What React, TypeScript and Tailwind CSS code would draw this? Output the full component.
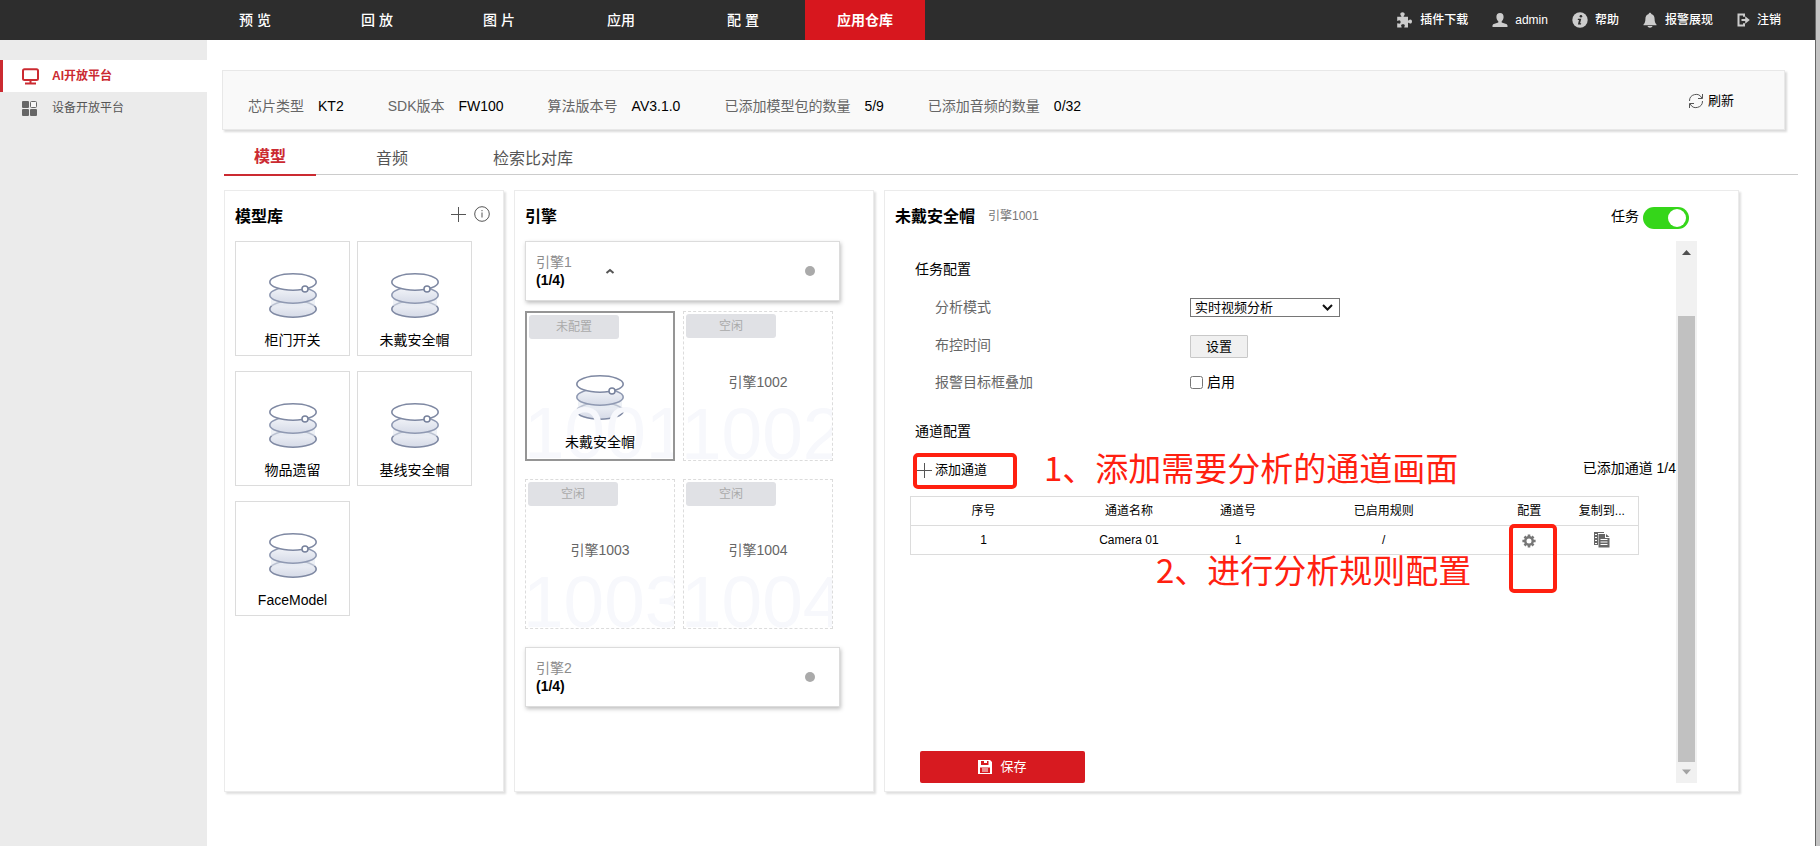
import React, { useState } from 'react';

const navItems = ['预 览', '回 放', '图 片', '应用', '配 置', '应用仓库'];

const stats = [
  { label: '芯片类型', value: 'KT2' },
  { label: 'SDK版本', value: 'FW100' },
  { label: '算法版本号', value: 'AV3.1.0' },
  { label: '已添加模型包的数量', value: '5/9' },
  { label: '已添加音频的数量', value: '0/32' },
];

const tabs = ['模型', '音频', '检索比对库'];

const models = ['柜门开关', '未戴安全帽', '物品遗留', '基线安全帽', 'FaceModel'];

const engines = [
  { id: '1001', status: '未配置', model: '未戴安全帽' },
  { id: '1002', status: '空闲' },
  { id: '1003', status: '空闲' },
  { id: '1004', status: '空闲' },
];

const PluginIcon = () => (
  <svg className="w-4 h-4" viewBox="0 0 16 16" fill="currentColor">
    <path d="M1.200 4.800h3.700c.5 0 .6-.4.3-.9C4.900 3.400 4.300 3 4.300 2.200 4.300 1 5.300.3 6.500.3S8.700 1 8.700 2.200c0 .8-.6 1.200-.9 1.700-.3.500-.2.900.3.900h3.900v3.100c0 .5.400.7.900.4.400-.3.700-.8 1.400-.8 1.100 0 1.700.9 1.700 2s-.6 2.100-1.700 2.100c-.7 0-1-.5-1.400-.8-.5-.3-.9-.1-.9.400v4.400H8.700c-.5 0-.6-.4-.4-.8.3-.4.5-.7.500-1.200 0-.9-.8-1.400-1.800-1.400s-1.900.5-1.900 1.400c0 .5.300.8.500 1.200.2.400.1.800-.4.800H1.200v-3.900c0-.5.3-.7.800-.4.400.2.700.5 1.200.5.900 0 1.400-.8 1.400-1.700S4.100 8.300 3.200 8.300c-.5 0-.8.3-1.200.5-.5.3-.8.100-.8-.4z" />
  </svg>
);

const UserIcon = () => (
  <svg className="w-4 h-4" viewBox="0 0 16 16" fill="currentColor">
    <path d="M8 1c2.400 0 3.600 1.700 3.600 3.900 0 1.800-.8 3.500-1.900 4.300v1.300l4.500 1.400c.8.3 1.300.9 1.300 1.700V15H.5v-1.400c0-.8.5-1.400 1.300-1.700l4.500-1.400V9.200C5.200 8.400 4.400 6.700 4.400 4.900 4.400 2.700 5.600 1 8 1z" />
  </svg>
);

const HelpIcon = () => (
  <svg className="w-4 h-4" viewBox="0 0 16 16">
    <circle cx="8" cy="8" r="7.700" fill="currentColor" />
    <circle cx="8.900" cy="4.300" r="1.300" fill="#2d2d2d" />
    <path d="M6 6.800h3.300l-1.200 4.500h1.100l-.3 1.200H5.900L7 8H5.700z" fill="#2d2d2d" />
  </svg>
);

const BellIcon = () => (
  <svg className="w-[14px] h-4" viewBox="0 0 14 16" fill="currentColor">
    <path d="M7 .8c.8 0 1.300.6 1.300 1.300C10.600 2.700 11.600 4.600 11.600 7c0 2.700.6 4.200 1.900 5.400v.9H.5v-.9C1.800 11.200 2.400 9.700 2.400 7c0-2.400 1-4.300 3.300-4.900C5.700 1.400 6.200.8 7 .8zM4.500 14h5c-.3 1-1.300 1.700-2.500 1.700S4.800 15 4.500 14z" />
  </svg>
);

const LogoutIcon = () => (
  <svg className="w-[13px] h-[14px]" viewBox="0 0 13 14" fill="currentColor">
    <path d="M.5.5H8v3.300H6V2.500H2.500v9H6v-1.300h2v3.300H.5z" />
    <path d="M4.500 5.900h3.700V3.300L12.800 7l-4.600 3.700V8.100H4.500z" />
  </svg>
);

const StackIcon = () => (
  <svg className="w-12 h-[45px]" viewBox="0 0 48 45" fill="none">
    <defs>
      <linearGradient id="disk" x1="0" y1="0" x2="0" y2="1">
        <stop offset="0" stopColor="#f3f5f9" />
        <stop offset="1" stopColor="#d5dae7" />
      </linearGradient>
    </defs>
    <ellipse cx="24" cy="36" rx="23.200" ry="8.200" fill="url(#disk)" stroke="#7f89a3" strokeWidth="1.600" />
    <path d="M2 24h44v9H2z" fill="#e3e7f0" opacity=".6" />
    <ellipse cx="24" cy="22" rx="23.200" ry="8.200" fill="url(#disk)" stroke="#8f99b2" strokeWidth="1.600" />
    <ellipse cx="24" cy="9" rx="23.200" ry="8.200" fill="#fff" stroke="#7f89a3" strokeWidth="1.600" />
    <circle cx="36" cy="16" r="3" fill="#fff" stroke="#76819c" strokeWidth="1.500" />
  </svg>
);

const PlusIcon = () => (
  <svg className="w-[15px] h-[15px]" viewBox="0 0 15 15" stroke="#555" fill="none">
    <path d="M7.500 0v15M0 7.500h15" />
  </svg>
);

const InfoIcon = () => (
  <svg className="w-4 h-4" viewBox="0 0 16 16" stroke="#555" fill="none">
    <circle cx="8" cy="8" r="7.300" />
    <path d="M8 6.500v5M8 4v1.200" />
  </svg>
);

const RefreshIcon = () => (
  <svg className="w-4 h-4" viewBox="0 0 16 16" stroke="#555" fill="none">
    <path d="M1.500 8a6.500 6.500 0 0 1 12.300-3M14.500 8a6.500 6.500 0 0 1-12.300 3" />
    <path d="M14.500 1v4.500H10M1.500 15v-4.500H6" />
  </svg>
);

const GearIcon = () => (
  <svg className="w-[14px] h-[14px]" viewBox="0 0 14 14" fill="none" stroke="#777">
    <circle cx="7" cy="7" r="3.700" strokeWidth="2.400" />
    <path
      d="M7 .4V3M7 11v2.600M.4 7H3M11 7h2.600M2.500 2.500l1.800 1.800M9.700 9.700l1.800 1.800M2.500 11.500l1.800-1.800M9.700 4.300l1.800-1.800"
      strokeWidth="2.600"
    />
  </svg>
);

const CopyIcon = () => (
  <svg className="w-4 h-4" viewBox="0 0 16 16" fill="#666">
    <path d="M0 0h10v1H4v12H0z" />
    <path d="M1 2.500h2M1 5.500h2M1 8.500h2M1 11.500h2" stroke="#fff" />
    <path d="M4.500 2H11v4h4.500v9.500h-11zM12 2l3.500 3H12z" />
    <path d="M6.500 7.500h7M6.500 10h7M6.500 12.500h7" stroke="#fff" />
  </svg>
);

const SaveIcon = () => (
  <svg className="w-[14px] h-[14px]" viewBox="0 0 14 14">
    <path d="M0 0h12l2 2v12H0z" fill="#fff" />
    <path d="M3 1h7.500v4H3zM2 7.500h10V13H2z" fill="#d71a20" />
    <path d="M6 1h3v2H6zM4 8.500h6v1H4zM4 10.500h6v1H4z" fill="#fff" />
  </svg>
);

const ModelContent = ({ name }: { name: string }) => (
  <>
    <StackIcon />
    <span className="relative z-10 mt-3 text-sm leading-[20px] text-black">{name}</span>
  </>
);

const EngineHeader = ({ name, open }: { name: string; open?: boolean }) => (
  <button className="flex items-center w-[315px] h-[60px] px-[10px] text-left bg-white border border-[#dcdcdc] shadow-[1px_2px_4px_rgba(0,0,0,0.25)]">
    <span className="w-[69px] text-sm leading-[18px]">
      <span className="block text-[#8c8c8c]">{name}</span>
      <span className="block font-bold text-black">(1/4)</span>
    </span>
    {open && (
      <svg className="w-[10px] h-[6px]" viewBox="0 0 10 6" fill="none" stroke="#555" strokeWidth="2">
        <path d="M1.500 5L5 2l3.500 3" />
      </svg>
    )}
    <span className="w-[10px] h-[10px] ml-auto mr-[14px] rounded-full bg-[#aaa]" />
  </button>
);

const panel = 'bg-white border border-[#ebebeb] shadow-[2px_2px_2px_rgba(0,0,0,0.13)]';

const App = () => {
  const [taskOn, setTaskOn] = useState(true);
  const [overlay, setOverlay] = useState(false);

  return (
    <div className="flex min-h-screen bg-white text-black font-['Liberation_Sans','Noto_Sans_CJK_SC',sans-serif]">
      <div className="flex flex-col flex-1 min-w-0">
        {/* Top bar */}
        <header className="flex h-10 pl-[195px] pr-[34px] bg-[#2d2d2d] text-white">
          <nav className="flex gap-[2px] text-sm">
            {navItems.map((item) => (
              <a
                key={item}
                href="#"
                className={
                  item === '应用仓库'
                    ? 'flex items-center justify-center w-[120px] bg-[#d7171e] font-bold'
                    : 'flex items-center justify-center w-[120px] font-medium'
                }
              >
                {item}
              </a>
            ))}
          </nav>
          <div className="flex items-center gap-6 ml-auto text-xs font-medium">
            <a href="#" className="flex items-center gap-2">
              <span className="text-[#ccc]"><PluginIcon /></span>
              插件下载
            </a>
            <a href="#" className="flex items-center gap-[7px]">
              <span className="text-[#ccc]"><UserIcon /></span>
              admin
            </a>
            <a href="#" className="flex items-center gap-[7px]">
              <span className="text-[#ccc]"><HelpIcon /></span>
              帮助
            </a>
            <a href="#" className="flex items-center gap-2">
              <span className="text-[#ccc]"><BellIcon /></span>
              报警展现
            </a>
            <a href="#" className="flex items-center gap-[7px]">
              <span className="text-[#ccc]"><LogoutIcon /></span>
              注销
            </a>
          </div>
        </header>

        <div className="flex flex-1">
          {/* Sidebar */}
          <aside className="w-[207px] shrink-0 pt-5 bg-[#ebebeb] text-xs">
            <a href="#" className="flex items-center h-8 pl-[18px] gap-[13px] bg-white border-l-[3px] border-[#cb2a31] text-[#cb2a31] font-bold">
              <svg className="w-[18px] h-[17px]" viewBox="0 0 18 17" fill="none" stroke="currentColor" strokeWidth="2">
                <rect x="2" y="1.200" width="15" height="10.800" rx="1.500" />
                <path d="M9.500 12v3M4 15.500h11" />
              </svg>
              AI开放平台
            </a>
            <a href="#" className="flex items-center h-8 pl-[18px] gap-[13px] border-l-[3px] border-transparent text-[#555]">
              <svg className="w-[18px] h-[17px]" viewBox="0 0 18 17" fill="#666">
                <rect x="1" y="1" width="7" height="7" rx="1" />
                <rect x="9.500" y="1.500" width="6" height="6" rx="1" fill="#f5f5f5" stroke="#666" />
                <rect x="1" y="9" width="7" height="7" rx="1" />
                <rect x="9" y="9" width="7" height="7" rx="1" />
              </svg>
              设备开放平台
            </a>
          </aside>

          <main className="flex flex-col flex-1 min-w-0 pt-[30px] pb-[54px]">
            {/* Device summary */}
            <section className="flex items-center h-[60px] ml-[15px] mr-[30px] pl-[25px] pr-[50px] bg-[#f9f9f9] border border-[#e8e8e8] shadow-[2px_2px_2px_rgba(0,0,0,0.15)] text-sm">
              <dl className="flex gap-11 pt-3">
                {stats.map((s) => (
                  <div key={s.label} className="flex gap-[14px]">
                    <dt className="text-[#666]">{s.label}</dt>
                    <dd>{s.value}</dd>
                  </div>
                ))}
              </dl>
              <button className="flex items-center gap-1 ml-auto pt-[2px] text-[13px]">
                <RefreshIcon />
                刷新
              </button>
            </section>

            {/* Tabs */}
            <div className="flex gap-[30px] h-10 mt-[5px] mx-[17px] border-b border-[#ccc] text-base">
              {tabs.map((tab, i) => (
                <button
                  key={tab}
                  className={
                    i === 0
                      ? 'min-w-[92px] px-[25px] -mb-[2px] pt-1 border-b-2 border-[#cb2a31] text-[#cb2a31] font-bold'
                      : 'min-w-[92px] px-[25px] pt-2 text-[#555]'
                  }
                >
                  {tab}
                </button>
              ))}
            </div>

            <div className="flex flex-1 gap-[10px] mt-[15px] ml-[17px] mr-[76px]">
              {/* Model library */}
              <section className={`w-[280px] shrink-0 px-[10px] ${panel}`}>
                <div className="flex items-center h-[50px]">
                  <h2 className="pt-[2px] text-base font-bold">模型库</h2>
                  <button aria-label="添加模型" className="ml-auto -mt-1"><PlusIcon /></button>
                  <button aria-label="说明" className="ml-2 mr-[3px] -mt-1"><InfoIcon /></button>
                </div>
                <div className="flex flex-wrap gap-x-[7px] gap-y-[15px]">
                  {models.map((m) => (
                    <button key={m} className="flex flex-col items-center justify-end w-[115px] h-[115px] pb-[5px] border border-[#dcdcdc]">
                      <ModelContent name={m} />
                    </button>
                  ))}
                </div>
              </section>

              {/* Engines */}
              <section className={`w-[360px] shrink-0 px-[10px] ${panel}`}>
                <div className="flex items-center h-[50px]">
                  <h2 className="pt-[2px] text-base font-bold">引擎</h2>
                </div>
                <EngineHeader name="引擎1" open />
                <div className="flex flex-wrap gap-x-2 gap-y-[18px] mt-[10px] mb-[18px]">
                  {engines.map((e) => (
                    <div
                      key={e.id}
                      className={
                        e.model
                          ? 'relative flex flex-col items-center w-[150px] h-[150px] overflow-hidden border-2 border-[#959595]'
                          : 'relative flex flex-col items-center w-[150px] h-[150px] overflow-hidden border border-dashed border-[#dcdcdc]'
                      }
                    >
                      <span className="self-start w-[90px] h-6 m-[2px] rounded-[3px] bg-[#e0e1e5] text-center text-xs leading-[24px] text-[#aaa]">
                        {e.status}
                      </span>
                      {e.model ? (
                        <div className="flex flex-col items-center mt-auto pb-[7px]">
                          <ModelContent name={e.model} />
                        </div>
                      ) : (
                        <span className="relative z-10 mt-[32px] text-sm leading-[20px] text-[#666]">引擎{e.id}</span>
                      )}
                      <span aria-hidden="true" className="absolute -left-[3px] -bottom-[14px] text-[73px] leading-[80px] text-[#f7f8fc]">
                        {e.id}
                      </span>
                    </div>
                  ))}
                </div>
                <EngineHeader name="引擎2" />
              </section>

              {/* Task settings */}
              <section className={`flex flex-col flex-1 min-w-0 pl-[10px] pb-2 ${panel}`}>
                <div className="flex items-center h-[50px] pr-[49px]">
                  <h2 className="pt-[2px] text-base font-bold">未戴安全帽</h2>
                  <span className="ml-[13px] text-xs text-[#777]">引擎1001</span>
                  <span id="task-label" className="ml-auto mr-1 text-sm">任务</span>
                  <button
                    role="switch"
                    aria-checked={taskOn}
                    aria-labelledby="task-label"
                    onClick={() => setTaskOn(!taskOn)}
                    className={
                      taskOn
                        ? 'flex items-center justify-end w-[46px] h-[22px] mt-1 px-[3px] rounded-full bg-[#35d61a]'
                        : 'flex items-center justify-start w-[46px] h-[22px] mt-1 px-[3px] rounded-full bg-[#bbb]'
                    }
                  >
                    <span className="w-[18px] h-[18px] rounded-full bg-white" />
                  </button>
                </div>

                <div className="flex flex-1 pl-[15px] pr-[41px]">
                  <div className="flex flex-col flex-1 min-w-0 pt-[9px] text-sm">
                    <h3 className="flex items-center h-[38px] pl-[5px]">任务配置</h3>
                    <div className="flex items-center h-[38px] pl-[25px]">
                      <label htmlFor="mode" className="w-[255px] text-[#666]">分析模式</label>
                      <div className="relative">
                        <select id="mode" className="block w-[150px] h-[19px] pl-1 appearance-none border border-[#767676] bg-white text-[13px] leading-[17px]">
                          <option>实时视频分析</option>
                        </select>
                        <svg className="absolute right-[7px] top-[6px] w-[11px] h-[7px] pointer-events-none" viewBox="0 0 11 7" fill="none" stroke="#111" strokeWidth="2">
                          <path d="M1 1l4.500 4.500L10 1" />
                        </svg>
                      </div>
                    </div>
                    <div className="flex items-center h-[38px] pl-[25px]">
                      <span className="w-[255px] text-[#666]">布控时间</span>
                      <button className="w-[58px] h-[23px] mt-[2px] border border-[#c8c8c8] rounded-[1px] bg-[#f0f0f0] text-[13px] leading-[21px]">
                        设置
                      </button>
                    </div>
                    <div className="flex items-center h-[38px] pb-[2px] pl-[25px]">
                      <span className="w-[255px] text-[#666]">报警目标框叠加</span>
                      <label className="flex items-center gap-1">
                        <input
                          type="checkbox"
                          className="w-[13px] h-[13px]"
                          checked={overlay}
                          onChange={(e) => setOverlay(e.target.checked)}
                        />
                        启用
                      </label>
                    </div>

                    <h3 className="flex items-center h-[38px] mt-[10px] pl-[5px]">通道配置</h3>
                    <div className="relative flex items-center h-10 pl-[7px]">
                      <button className="flex items-center gap-[3px] text-[13px]">
                        <PlusIcon />
                        添加通道
                      </button>
                      <span className="ml-auto pb-1">已添加通道 1/4</span>
                      {/* Step 1 callout */}
                      <span className="absolute left-[3px] top-[3px] w-[104px] h-9 border-4 border-[#ff2010] rounded-[5px]" />
                      <span className="absolute left-[134px] -top-px whitespace-nowrap font-['Noto_Sans_CJK_SC',sans-serif] text-[33px] leading-[36px] text-[#ff2010]">
                        1、添加需要分析的通道画面
                      </span>
                    </div>

                    <div className="relative mt-[6px] mr-[37px]">
                      <table className="w-full table-fixed border-collapse border border-[#dcdcdc] text-center text-xs">
                        <thead>
                          <tr className="h-[29px] border-b border-[#dcdcdc]">
                            <th className="w-[20%] font-normal">序号</th>
                            <th className="w-[20%] font-normal">通道名称</th>
                            <th className="w-[10%] font-normal">通道号</th>
                            <th className="w-[30%] font-normal">已启用规则</th>
                            <th className="w-[10%] font-normal">配置</th>
                            <th className="w-[10%] font-normal">复制到...</th>
                          </tr>
                        </thead>
                        <tbody>
                          <tr className="h-[29px]">
                            <td>1</td>
                            <td>Camera 01</td>
                            <td>1</td>
                            <td>/</td>
                            <td className="relative">
                              <button aria-label="配置" className="block mx-auto pt-[2px]"><GearIcon /></button>
                              <span className="absolute left-4 -top-[2px] w-12 h-[69px] border-4 border-[#ff2010] rounded-[5px]" />
                            </td>
                            <td>
                              <button aria-label="复制到" className="block mx-auto"><CopyIcon /></button>
                            </td>
                          </tr>
                        </tbody>
                      </table>
                      {/* Step 2 callout */}
                      <span className="absolute left-[246px] top-[55px] whitespace-nowrap font-['Noto_Sans_CJK_SC',sans-serif] text-[33px] leading-[36px] text-[#ff2010]">
                        2、进行分析规则配置
                      </span>
                    </div>

                    <button className="flex items-center justify-center gap-2 w-[165px] h-8 mt-auto ml-[10px] rounded-[2px] bg-[#d71a20] text-[13px] text-white">
                      <SaveIcon />
                      保存
                    </button>
                  </div>

                  {/* Scroll bar */}
                  <div className="flex flex-col items-center w-[21px] bg-[#f1f1f1]">
                    <svg className="w-[21px] h-[21px]" viewBox="0 0 21 21" fill="#505050">
                      <path d="M10.500 9L15 14H6z" />
                    </svg>
                    <div className="w-[17px] flex-1 mt-[54px] bg-[#c1c1c1]" />
                    <svg className="w-[21px] h-[21px]" viewBox="0 0 21 21" fill="#a3a3a3">
                      <path d="M6 7.500h9L10.500 12.500z" />
                    </svg>
                  </div>
                </div>
              </section>
            </div>
          </main>
        </div>
      </div>

      {/* Window edge */}
      <div className="w-[5px] shrink-0 bg-[#c4c4c4] border-l border-[#666]" />
    </div>
  );
};

export default App;
